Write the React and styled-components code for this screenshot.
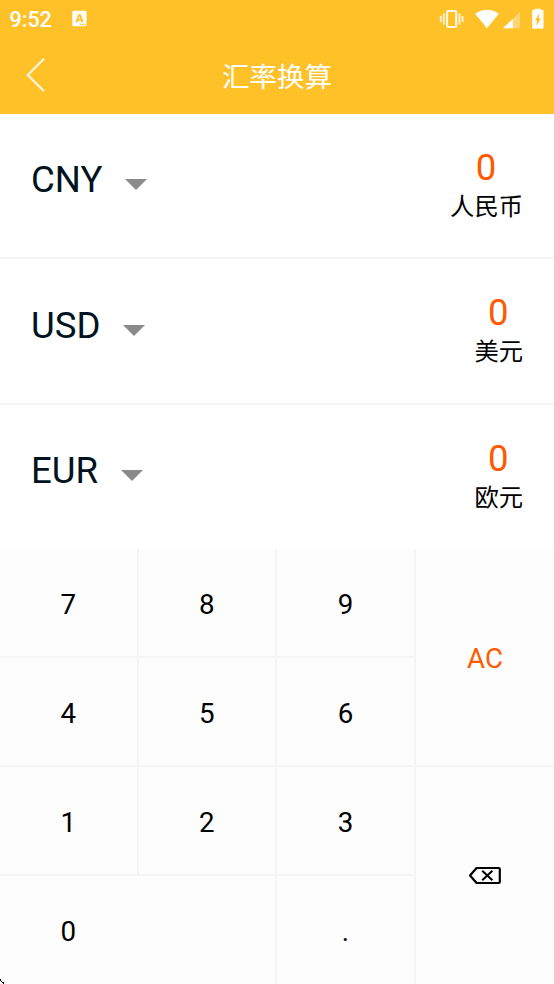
import React from "react";
import styled, { createGlobalStyle } from "styled-components";

const currencies = [
  { code: "CNY", name: "人民币", value: "0" },
  { code: "USD", name: "美元", value: "0" },
  { code: "EUR", name: "欧元", value: "0" },
];

const keys = [
  { label: "7", area: "k7" },
  { label: "8", area: "k8" },
  { label: "9", area: "k9" },
  { label: "4", area: "k4" },
  { label: "5", area: "k5" },
  { label: "6", area: "k6" },
  { label: "1", area: "k1" },
  { label: "2", area: "k2" },
  { label: "3", area: "k3" },
  { label: "0", area: "k0", wide: true, bottom: true },
  { label: ".", area: "dot", bottom: true },
];

export default function App() {
  return (
    <Screen>
      <GlobalStyle />
      <Header>
        <StatusBar>
          <Clock>9:52</Clock>
          <InputIcon />
          <StatusIcons />
        </StatusBar>
        <TitleBar>
          <BackButton aria-label="返回">
            <svg width="20" height="36" viewBox="0 0 20 36" fill="none">
              <path
                d="M18 1.8 1.8 18 18 34.2"
                stroke="#fff"
                strokeOpacity="0.85"
                strokeWidth="2.2"
              />
            </svg>
          </BackButton>
          <Title>汇率换算</Title>
        </TitleBar>
      </Header>

      <Rates>
        {currencies.map((item) => (
          <CurrencyRow key={item.code}>
            <CurrencyPicker>
              {item.code}
              <Caret />
            </CurrencyPicker>
            <Amount>
              <Value>{item.value}</Value>
              <Name>{item.name}</Name>
            </Amount>
          </CurrencyRow>
        ))}
      </Rates>

      <Keypad>
        {keys.map((key) => (
          <Key key={key.area} $area={key.area} $wide={key.wide} $bottom={key.bottom}>
            {key.label}
          </Key>
        ))}
        <Key $area="ac" $accent $last>
          AC
        </Key>
        <Key $area="del" $last $bottom aria-label="删除">
          <svg width="34" height="20" viewBox="0 0 34 20" fill="none" stroke="#000">
            <path
              d="M8.6 2h22.2q1 0 1 1v13q0 1-1 1H8.6L2 9.5Z"
              strokeWidth="2.2"
              strokeLinejoin="round"
            />
            <path d="m14.2 4.7 10.2 9.6m0-9.6-10.2 9.6" strokeWidth="2.1" />
          </svg>
        </Key>
      </Keypad>

      <Corner width="4" height="5" viewBox="0 0 4 5" shapeRendering="crispEdges">
        <path d="M0 0h1v2H0zM1 2h1v1H1zM2 3h2v2H3V4H2z" />
      </Corner>
    </Screen>
  );
}

function InputIcon() {
  return (
    <svg width="16" height="18" viewBox="0 0 16 18">
      <rect x="0.3" y="0.7" width="14.2" height="15.5" rx="1.2" fill="#fff" />
      <path
        d="M3.4 12.2 6.3 4.2h2.4l2.9 8H9.5L9 10.7H6L5.5 12.2ZM6.5 9.1h2L7.5 6.2Z"
        fill="#ffc128"
        fillRule="evenodd"
      />
      <path
        d="M7.8 13.7h1.4v1.3H7.8zM10 13.7h1.4v1.3H10zM12.2 13.7h1.3v1.3h-1.3z"
        fill="#ffc128"
      />
    </svg>
  );
}

function StatusIcons() {
  return (
    <Icons width="108" height="24" viewBox="0 0 108 24">
      {/* vibrate */}
      <g fill="none" stroke="#fff" strokeOpacity="0.85" strokeWidth="1.8">
        <rect x="8" y="4" width="9.2" height="16" rx="1" strokeWidth="2.2" />
        <path d="M4.8 6.5v11M1.7 9v6M20.5 6.5v11M23.5 9v6" />
      </g>
      {/* wifi */}
      <path d="M36.2 6.8C43.5 1.4 52.5 1.4 59.8 6.8L48 21.3Z" fill="#fff" />
      {/* signal */}
      <path d="M64 21.3 81 5v16.3Z" fill="#fff" opacity="0.35" />
      <path d="M64 21.3 73.8 11.9v9.4Z" fill="#fff" />
      {/* battery */}
      <path
        d="M96.2 3.2V2h5v1.2h3V21.3H93.4V3.2Z"
        fill="#fff"
        stroke="#fff"
        strokeWidth="0.6"
        strokeLinejoin="round"
      />
      <path d="M100.4 6.5 95.9 13.3h2.2L97.4 19l4.5-7.5h-2.3Z" fill="#ffc128" />
    </Icons>
  );
}

const GlobalStyle = createGlobalStyle`
  * {
    box-sizing: border-box;
  }
  body {
    margin: 0;
    background: #fff;
    font-family: Roboto, "Noto Sans CJK SC", sans-serif;
  }
  button {
    padding: 0;
    border: 0;
    background: none;
    font: inherit;
  }
  svg {
    display: block;
  }
`;

const Screen = styled.div`
  position: relative;
  width: 554px;
  height: 984px;
  overflow: hidden;
`;

const Header = styled.header`
  height: 113.5px;
  background: #ffc128;
  color: #fff;
`;

const StatusBar = styled.div`
  display: flex;
  align-items: center;
  height: 37px;
  padding: 0 7px 0 9.5px;
`;

const Clock = styled.span`
  width: 62px;
  padding-top: 2px;
  font-size: 21.5px;
  font-weight: 500;
  line-height: 24px;
`;

const Icons = styled.svg`
  margin-left: auto;
`;

const TitleBar = styled.div`
  display: grid;
  grid-template-columns: 60px 1fr 60px;
  align-items: center;
  height: 76px;
`;

const BackButton = styled.button`
  padding-left: 26px;
`;

const Title = styled.h1`
  margin: 0;
  padding-top: 5px;
  font-size: 27.5px;
  font-weight: 400;
  line-height: 40px;
  text-align: center;
`;

const Rates = styled.main`
  height: 435.5px;
`;

const CurrencyRow = styled.section`
  display: flex;
  justify-content: space-between;
  height: 145.5px;
  padding: 32px 31px 0;
  border-bottom: 2px solid #f6f6f6;

  &:last-child {
    height: 144.5px;
    border-bottom: 0;
  }
`;

const CurrencyPicker = styled.button`
  display: flex;
  align-items: center;
  gap: 22.5px;
  height: 68px;
  color: #00131e;
  font-size: 36.6px;
`;

const Caret = styled.span`
  margin-top: 10px;
  border: 11px solid transparent;
  border-top-color: #8a8a8a;
  border-bottom: 0;
`;

const Amount = styled.div`
  display: flex;
  flex-direction: column;
  align-items: center;
`;

const Value = styled.span`
  padding-right: 1px;
  color: #ff5a00;
  font-size: 36.6px;
  line-height: 43px;
`;

const Name = styled.span`
  color: #000;
  font-size: 24.3px;
  line-height: 36px;
`;

const Keypad = styled.div`
  display: grid;
  grid-template-columns: 138.5px 138.5px 139px 138px;
  grid-template-rows: repeat(4, 109px);
  grid-template-areas:
    "k7 k8 k9 ac"
    "k4 k5 k6 ac"
    "k1 k2 k3 del"
    "k0 k0 dot del";
  background: #fdfdfd;
`;

const Key = styled.button`
  grid-area: ${(p) => p.$area};
  display: flex;
  align-items: center;
  justify-content: center;
  padding-top: ${(p) => (p.$last ? "2px" : "3px")};
  padding-right: ${(p) => (p.$wide ? "138.5px" : "0")};
  border-right: ${(p) => (p.$last ? "0" : "2px solid #f5f5f5")};
  border-bottom: 2px solid ${(p) => (p.$bottom ? "transparent" : "#f5f5f5")};
  color: ${(p) => (p.$accent ? "#ff5a00" : "#000")};
  font-size: 27.7px;
`;

const Corner = styled.svg`
  position: absolute;
  left: 0;
  bottom: 0;
`;
